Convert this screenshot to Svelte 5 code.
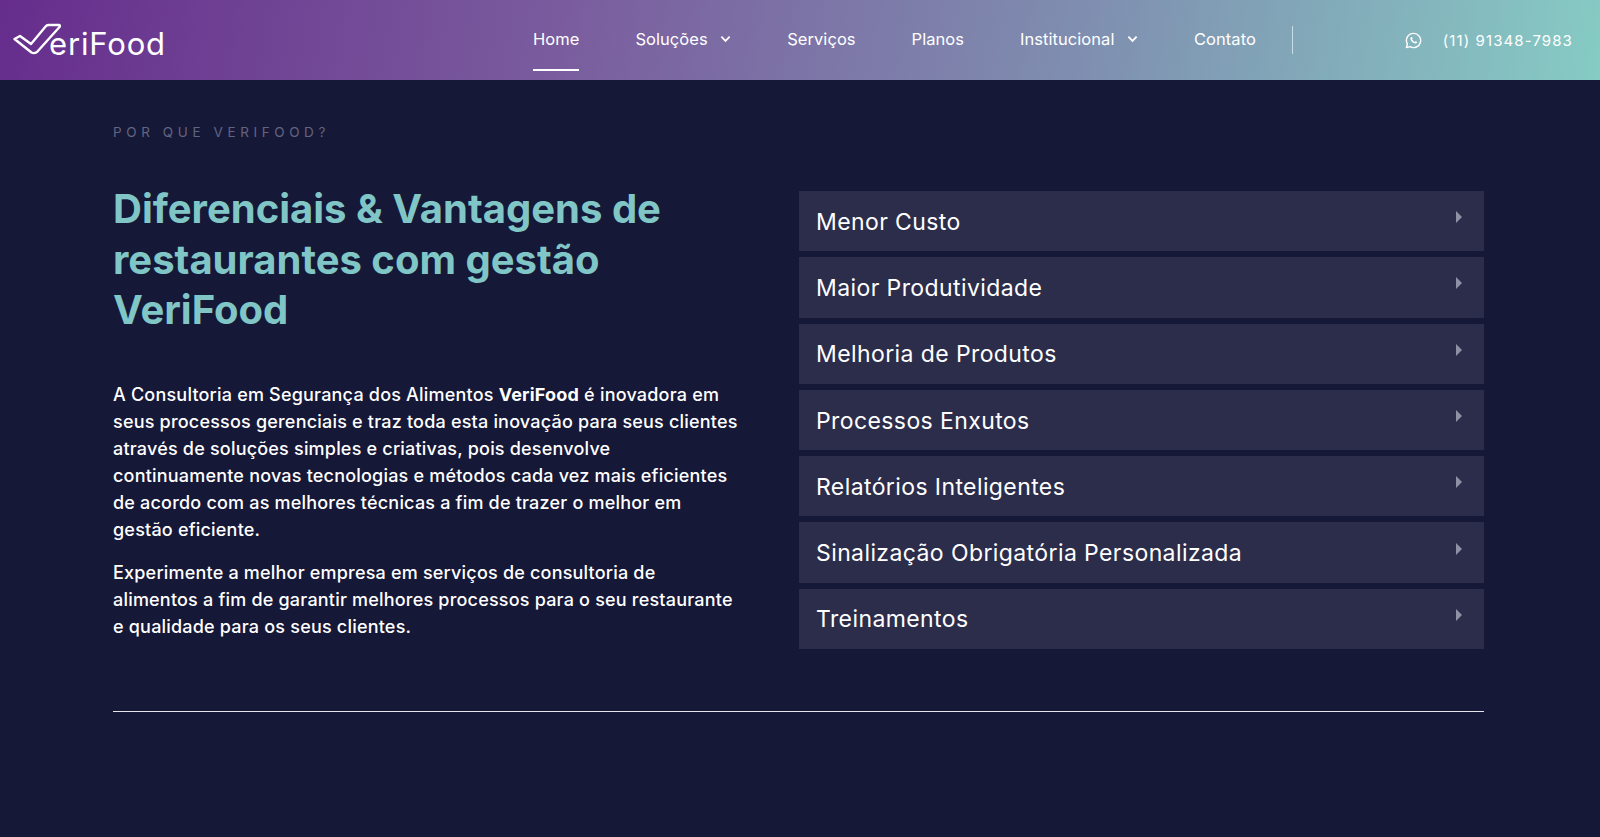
<script>
	const nav = [
		{ label: 'Home', active: true },
		{ label: 'Soluções', caret: true },
		{ label: 'Serviços' },
		{ label: 'Planos' },
		{ label: 'Institucional', caret: true },
		{ label: 'Contato' }
	];
	const items = [
		'Menor Custo',
		'Maior Produtividade',
		'Melhoria de Produtos',
		'Processos Enxutos',
		'Relatórios Inteligentes',
		'Sinalização Obrigatória Personalizada',
		'Treinamentos'
	];
</script>

<header>
	<a class="logo" href="#top">
		<svg class="check" viewBox="0 0 48 32" width="48" height="32" aria-hidden="true">
			<path d="M1.5 16 L7 13 L18 21 L33 3 Q34 2 36 2 L46 2 Q47.5 2.5 46.5 4 L24 29 Q21 31 18.5 29.5 Z" fill="none" stroke="#fff" stroke-width="2.4" stroke-linejoin="round" />
		</svg>
		<span>eriFood</span>
	</a>
	<nav>
		{#each nav as link}
			<a class:active={link.active} href="#top">
				{link.label}
				{#if link.caret}
					<svg viewBox="0 0 12 8" width="11" height="8" aria-hidden="true">
						<path d="M1.5 1.5 L6 6 L10.5 1.5" fill="none" stroke="#fff" stroke-width="2" />
					</svg>
				{/if}
			</a>
		{/each}
	</nav>
	<div class="phone">
		<svg viewBox="0 0 24 24" width="17" height="17" aria-hidden="true">
			<path d="M12 2 A10 10 0 0 0 3.4 17 L2 22 L7.2 20.7 A10 10 0 1 0 12 2 Z" fill="none" stroke="#fff" stroke-width="2" stroke-linejoin="round" />
			<path d="M8.6 7.2 C7.6 8 7.4 9.4 8 10.8 C9 13.2 11 15.2 13.4 16 C14.8 16.4 16 16.2 16.8 15.2 C17.2 14.6 17.2 14 17 13.8 L15 12.9 L14 14 C12.4 13.4 10.8 11.9 10 10.2 L10.9 9.2 L10 7.2 C9.6 7 9 7 8.6 7.2 Z" fill="#fff" />
		</svg>
		<span>(11) 91348-7983</span>
	</div>
</header>

<main>
	<p class="eyebrow">POR QUE VERIFOOD?</p>
	<section class="columns">
		<div class="intro">
			<h1>Diferenciais &amp; Vantagens de restaurantes com gestão VeriFood</h1>
			<p>A Consultoria em Segurança dos Alimentos <strong>VeriFood</strong> é inovadora em seus processos gerenciais e traz toda esta inovação para seus clientes através de soluções simples e criativas, pois desenvolve continuamente novas tecnologias e métodos cada vez mais eficientes de acordo com as melhores técnicas a fim de trazer o melhor em gestão eficiente.</p>
			<p>Experimente a melhor empresa em serviços de consultoria de alimentos a fim de garantir melhores processos para o seu restaurante e qualidade para os seus clientes.</p>
		</div>
		<ul>
			{#each items as item}
				<li>
					<span>{item}</span>
					<i></i>
				</li>
			{/each}
		</ul>
	</section>
	<hr />
</main>

<style>
	:global(body) {
		background: #161838;
		font-family: Inter, 'Open Sans', sans-serif;
		color: #fff;
	}
	header {
		height: 80px;
		display: flex;
		align-items: flex-start;
		padding: 0 27px 0 13px;
		background: linear-gradient(100deg, #662d8c 0%, #7a5c9e 35%, #7f8fb0 68%, #86cbc4 100%);
	}
	.logo {
		display: flex;
		align-items: flex-start;
		padding-top: 23px;
		color: #fff;
		text-decoration: none;
		width: 520px;
	}
	.logo span {
		font-size: 31px;
		line-height: 36px;
		letter-spacing: 0.85px;
		margin: 3px 0 0 -12px;
	}
	nav {
		display: flex;
		gap: 56px;
		padding-right: 37px;
		position: relative;
	}
	nav::after {
		content: '';
		position: absolute;
		right: 0;
		top: 26px;
		height: 28px;
		width: 1px;
		background: #c9dbe8;
	}
	nav a {
		height: 71px;
		display: flex;
		align-items: center;
		gap: 12.5px;
		padding-top: 8px;
		box-sizing: border-box;
		color: #fff;
		font-size: 16.5px;
		letter-spacing: 0.05px;
		text-decoration: none;
		border-bottom: 2px solid transparent;
	}
	nav a.active {
		border-bottom-color: #fff;
	}
	.phone {
		margin-left: auto;
		height: 80px;
		display: flex;
		align-items: center;
		gap: 21px;
		font-size: 15px;
		letter-spacing: 1.1px;
	}
	main {
		padding: 0 116px 0 113px;
		height: 757px;
		box-sizing: border-box;
	}
	.eyebrow {
		margin: 0;
		padding-top: 44px;
		height: 68px;
		box-sizing: border-box;
		font-size: 13.5px;
		line-height: 17px;
		letter-spacing: 4.6px;
		color: #63657f;
	}
	.columns {
		display: flex;
		justify-content: space-between;
		padding-top: 43px;
	}
	.intro {
		width: 632px;
	}
	h1 {
		margin: -7px 0 45px;
		font-size: 40px;
		line-height: 50.5px;
		font-weight: 700;
		color: #80c6c6;
		max-width: 625px;
	}
	.intro p {
		margin: 0 0 16px;
		font-size: 18px;
		line-height: 27px;
		font-weight: 500;
		letter-spacing: 0.2px;
	}
	.intro p:last-child {
		margin-bottom: 0;
	}
	ul {
		width: 685px;
		margin: 0;
		padding: 0;
		list-style: none;
		display: flex;
		flex-direction: column;
		gap: 6px;
	}
	li {
		height: 60.3px;
		display: flex;
		align-items: center;
		justify-content: space-between;
		padding: 1px 22px 0 17px;
		box-sizing: border-box;
		background: #2c2d4b;
		font-size: 23px;
		font-weight: 400;
		letter-spacing: 0.4px;
	}
	li i {
		width: 0;
		height: 0;
		margin-bottom: 9px;
		border-left: 6px solid #8f90a6;
		border-top: 6px solid transparent;
		border-bottom: 6px solid transparent;
	}
	hr {
		margin: 62px 0 0;
		border: 0;
		border-top: 1px solid #e4e4ea;
	}
</style>
